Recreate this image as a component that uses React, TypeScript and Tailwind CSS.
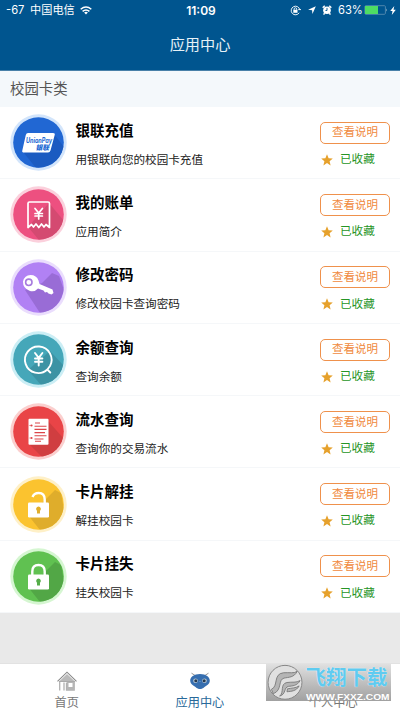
import type { ReactNode } from "react"

type AppItem = {
  name: string
  desc: string
  ring: string
  fill: string
  shade: string
  shadow: string
  glyph: ReactNode
}

const apps: AppItem[] = [
  {
    name: "银联充值",
    desc: "用银联向您的校园卡充值",
    ring: "#d3e5fb",
    fill: "#2167d3",
    shade: "#1a57bb",
    shadow: "M14 39 L26 54 Q48 53 54 33 L44 20 Z",
    glyph: (
      <>
        <path d="M18 19 H43 Q45.3 19 44.7 21 L40.5 36.5 Q39.9 38.5 38 38.5 H14 Q11.7 38.5 12.3 36.5 L15.8 21 Q16.3 19 18 19 Z" fill="#fff" />
        <text x="16" y="29.2" fontSize="7" fontWeight="700" fontStyle="italic" textLength="26" lengthAdjust="spacingAndGlyphs" fill="#2167d3">
          UnionPay
        </text>
        <text x="25.5" y="36" fontSize="6.7" fontWeight="900" fontStyle="italic" textLength="13.5" lengthAdjust="spacingAndGlyphs" fill="#2167d3">
          银联
        </text>
      </>
    ),
  },
  {
    name: "我的账单",
    desc: "应用简介",
    ring: "#fbd0dc",
    fill: "#ed5080",
    shade: "#cb486c",
    shadow: "M18 41 L29 54 Q48 53 54 35 L39 17 Z",
    glyph: (
      <g fill="none" stroke="#fff" strokeWidth="1.7" strokeLinejoin="round" strokeLinecap="round">
        <path d="M18 41.5 V17.5 Q18 16 19.5 16 H38 Q39.5 16 39.5 17.5 V41.5 L36 38.5 L34 41 L31.5 38 L28.8 41.5 L26 38 L23.5 41 L21.5 38.5 Z" />
        <path d="M25 22.5 L28.7 27 L32.4 22.5 M28.7 27 V33 M25 27.5 H32.4 M25 30 H32.4" />
      </g>
    ),
  },
  {
    name: "修改密码",
    desc: "修改校园卡查询密码",
    ring: "#eaddfd",
    fill: "#b181f4",
    shade: "#9265cc",
    shadow: "M15 31 L30 54 Q48 53 54 31 L49 17 L42 14 L32 24 Z",
    glyph: (
      <>
        <path
          d="M20.5 16 Q26.5 16 28.5 21.5 L29.5 25 L42.5 30.5 L43.5 34 L41.5 35.5 L38.5 34.5 L37 33 L35 33.5 L33.5 31.5 L28 29.5 Q24.5 33.5 19.5 31.8 Q12.8 29 13 22.5 Q14.5 16.2 20.5 16 Z"
          fill="#fff"
        />
        <circle cx="18.8" cy="23.3" r="3.2" fill="none" stroke="#a77bde" strokeWidth="1.6" />
      </>
    ),
  },
  {
    name: "余额查询",
    desc: "查询余额",
    ring: "#cbeef5",
    fill: "#45a7b9",
    shade: "#3a8c9d",
    shadow: "M18 39 L31 54 Q48 52 54 35 L40 20 Z",
    glyph: (
      <g fill="none" stroke="#fff" strokeWidth="1.9" strokeLinecap="round" strokeLinejoin="round">
        <path d="M37.3 38.5 A13.3 13.3 0 1 1 40 35 L37.3 38.5 L40.3 41.5" />
        <path d="M25 22 L28.7 26.8 L32.4 22 M28.7 26.8 V34.5 M25 27.5 H32.4 M25 30.7 H32.4" />
      </g>
    ),
  },
  {
    name: "流水查询",
    desc: "查询你的交易流水",
    ring: "#fbcfce",
    fill: "#e94447",
    shade: "#c73c3e",
    shadow: "M19 41 L32 54 Q48 52 54 36 L38 18 Z",
    glyph: (
      <>
        <rect x="18.5" y="15.7" width="20" height="26" rx="1" fill="#fff" />
        <path d="M25 20 H30 M24.5 23.2 H36.5 M24.5 26.4 H36.5 M24.5 29.6 H35 M24.5 32.8 H36.5 M24.5 36 H33.5 M25 38.3 H31" stroke="#dc4549" strokeWidth="1.1" />
        <path d="M18.5 22.5 H21 M18.5 35 H21" stroke="#f2a1a2" strokeWidth=".8" />
        <circle cx="21.5" cy="22.5" r="1.1" fill="#dc4549" />
        <circle cx="21.5" cy="35" r="1.1" fill="#dc4549" />
      </>
    ),
  },
  {
    name: "卡片解挂",
    desc: "解挂校园卡",
    ring: "#fef0c8",
    fill: "#fbc32f",
    shade: "#d5a52b",
    shadow: "M18 39 L30 54 Q48 53 54 34 L51 17 L45 14 L34 25 Z",
    glyph: (
      <>
        <rect x="18" y="26.5" width="21" height="15" rx="1.3" fill="#fff" />
        <path d="M22.5 21 Q24 17 28.7 17 Q34.7 17 34.7 23.5 V28" fill="none" stroke="#fff" strokeWidth="2.4" />
        <path d="M28.5 30.5 A2.4 2.4 0 0 1 30 34.7 V37.5 H27 V34.7 A2.4 2.4 0 0 1 28.5 30.5 Z" fill="#e0ae2c" />
      </>
    ),
  },
  {
    name: "卡片挂失",
    desc: "挂失校园卡",
    ring: "#d5f6d1",
    fill: "#60c151",
    shade: "#4d9e43",
    shadow: "M18 39 L30 54 Q48 53 54 34 L51 17 L45 14 L34 25 Z",
    glyph: (
      <>
        <rect x="18" y="26.5" width="21" height="15" rx="1.3" fill="#fff" />
        <path d="M22.3 28 V23.5 Q22.3 17 28.5 17 Q34.7 17 34.7 23.5 V28" fill="none" stroke="#fff" strokeWidth="2.4" />
        <path d="M28.5 30.5 A2.4 2.4 0 0 1 30 34.7 V37.5 H27 V34.7 A2.4 2.4 0 0 1 28.5 30.5 Z" fill="#55ad49" />
      </>
    ),
  },
]

function AppIcon({ item, id }: { item: AppItem; id: string }) {
  return (
    <svg viewBox="0 0 57 57" className="h-[57px] w-[57px] shrink-0">
      <clipPath id={id}>
        <circle cx="28.5" cy="28.5" r="25.3" />
      </clipPath>
      <circle cx="28.5" cy="28.5" r="28.2" fill={item.ring} />
      <circle cx="28.5" cy="28.5" r="25.3" fill={item.fill} />
      <path d={item.shadow} fill={item.shade} opacity="0.75" clipPath={`url(#${id})`} />
      {item.glyph}
    </svg>
  )
}

function Star() {
  return (
    <svg viewBox="0 0 12 12" className="h-3 w-3">
      <path d="M6 .3 7.6 4.2 11.8 4.5 8.6 7.2 9.6 11.4 6 9.1 2.4 11.4 3.4 7.2 .2 4.5 4.4 4.2Z" fill="#e6a12c" />
    </svg>
  )
}

function AppRow({ item, index }: { item: AppItem; index: number }) {
  return (
    <div className="flex h-[72.3px] items-center border-b border-[#f5f7f9] pr-[10px] pl-[10px]">
      <AppIcon item={item} id={`icon-${index}`} />
      <div className="ml-[8.5px] flex flex-1 flex-col gap-[9px] pt-[5px]">
        <div className="text-[14.5px] leading-5 font-bold text-black">{item.name}</div>
        <div className="text-[11.6px] leading-5 text-[#222]">{item.desc}</div>
      </div>
      <div className="flex w-[70px] flex-col gap-[6px] pt-[6px]">
        <button type="button" className="flex h-[22px] items-center justify-center rounded-[5px] border border-[#ef914c] pt-px text-[11.5px] leading-none text-[#f08a3e]">
          查看说明
        </button>
        <div className="flex h-5 items-center gap-[7px] pl-px text-[11.6px] text-[#269526]">
          <Star />
          已收藏
        </div>
      </div>
    </div>
  )
}

function StatusBar() {
  return (
    <div className="flex h-5 items-center pt-px text-[11.2px] text-white">
      <div className="flex flex-1 items-center pl-1.5">
        <span className="w-[24px]">-67</span>
        <span>中国电信</span>
        <svg viewBox="0 0 14 10" className="ml-[5px] h-[9px] w-3" fill="none" stroke="#fff" strokeWidth="1.7">
          <path d="M.8 3.6 Q7-1.7 13.2 3.6 M3 6 Q7 2.6 11 6" />
          <path d="M4.8 7.3 Q7 5.6 9.2 7.3 L7 9.7Z" fill="#fff" stroke="none" />
        </svg>
      </div>
      <span className="text-[12px] font-semibold">11:09</span>
      <div className="flex flex-1 items-center justify-end pr-[4px]">
        <svg viewBox="0 0 12 12" className="h-[11px] w-[11px]" fill="none" stroke="#fff">
          <path d="M10 8.5 A4.7 4.7 0 1 1 10.6 5 M9 5 h3" />
          <path d="M4.5 5.5 V4.5 Q4.5 3 5.9 3 Q7.3 3 7.3 4.5 V5.5" strokeWidth=".9" />
          <rect x="3.6" y="5.2" width="4.6" height="3.3" fill="#fff" stroke="none" />
        </svg>
        <svg viewBox="0 0 9 9" className="ml-[7px] h-2 w-2">
          <path d="M8.8 .2 5 9 4.6 4.7 .1 4.3Z" fill="#fff" />
        </svg>
        <svg viewBox="0 0 11 11" className="ml-[6px] h-[10px] w-[10px]">
          <circle cx="5.5" cy="5.8" r="4.2" fill="#fff" />
          <path d="M.8 3 3 .8 M8 .8 10.2 3 M2.8 9 1.8 10.5 M8.2 9 9.2 10.5" stroke="#fff" strokeWidth="1.6" />
          <path d="M5.5 3.2 V6 H3.8" fill="none" stroke="#00558f" />
        </svg>
        <span className="ml-[6px] w-[24px]">63%</span>
        <svg viewBox="0 0 24 10" className="ml-[2px] h-[10px] w-6">
          <rect x=".9" y=".7" width="20.5" height="8.6" rx="1" fill="none" stroke="#568bb0" strokeWidth=".9" />
          <rect x="1" y="1" width="13" height="8" fill="#4ddc63" />
          <path d="M22.2 3.5 Q24 5 22.2 6.5Z" fill="#8eb2ca" />
        </svg>
        <svg viewBox="0 0 6 9" className="ml-[2px] h-[9px] w-[6px]">
          <path d="M4.3 0 .2 5 H2.5 L1.8 9 5.8 3.8 H3.5Z" fill="#fff" />
        </svg>
      </div>
    </div>
  )
}

function HomeIcon() {
  return (
    <svg viewBox="0 0 20 20" className="h-5 w-5">
      <path d="M2 10.5 10 3 18 10.5Z" fill="#bababa" />
      <path d="M.5 10.3 10 1.2 19.5 10.3" fill="none" stroke="#888" strokeWidth="1.1" />
      <path d="M2.7 10.8 V19.5 M17.2 10.8 V19 H9.5 V11.5 M7 11.5 V19.5" fill="none" stroke="#b1b1b1" strokeWidth="1.3" />
      <path d="M10 10.5 H17 V19 H10Z M11.5 12 V16 H15.5 V12Z" fill="#b6b6b6" fillRule="evenodd" />
      <path d="M2 10.5 H18" stroke="#aaa" />
    </svg>
  )
}

function RobotIcon() {
  return (
    <svg viewBox="0 0 20 20" className="h-5 w-5">
      <path d="M1.5 2.2 6 5 M18.5 2.2 14 5" stroke="#777" strokeWidth=".8" />
      <path d="M10 3 C16 3 20 6 19.8 10 C19.6 13 17 14.5 14.5 16 C13 17.5 11.5 18 10 18 C8.5 18 7 17.5 5.5 16 C3 14.5 .4 13 .2 10 C0 6 4 3 10 3Z" fill="#366eaf" />
      <circle cx="5.5" cy="9.7" r="2.3" fill="#b9c9d4" />
      <circle cx="14.5" cy="9.7" r="2.3" fill="#b9c9d4" />
      <circle cx="5.8" cy="9.7" r="1.5" fill="#24384f" />
      <circle cx="14.2" cy="9.7" r="1.5" fill="#24384f" />
      <path d="M9 10 10 11 11 10" fill="none" stroke="#6c9ccc" strokeWidth=".6" />
    </svg>
  )
}

function Watermark() {
  return (
    <div className="absolute top-0 left-[266px] flex h-[37px] w-[125px] items-center bg-linear-to-b from-[#dededeee] to-[#929292dd]">
      <svg viewBox="0 0 38 38" className="ml-px h-[37px] w-[37px] shrink-0">
        <circle cx="18.5" cy="18.8" r="17.4" fill="#e0e0e0" stroke="#858585" strokeWidth="1" />
        <path
          d="M4.5 26 C12 23 6 10 17 9 C23 8.5 28 10 31 7.5 C28 14 22 13.5 17.5 14.5 C11 16 16 27 6.5 30.5Z M13 33 C18 29 13 20.5 20.5 19 C26 18.2 30 19.5 34 17 C31 22.5 26 22.5 22 23 C17 24 20 31 13 33Z M21 25.5 C26 24.5 29 25 33 22.5 C30 28 25 28 20.5 28.5Z"
          fill="#b5b5b5"
          stroke="#777"
          strokeWidth=".9"
        />
      </svg>
      <div className="flex flex-col pl-[1.5px] whitespace-nowrap">
        <span className="h-[24px] text-[20.5px] leading-[25px] font-bold text-[#5fcbf0] [text-shadow:0_0_1px_#fff]">飞翔下载</span>
        <svg viewBox="0 0 84 9" className="mt-[3px] h-[9px] w-[84px] font-['Liberation_Sans',sans-serif]">
          <text x="0" y="7.8" fontSize="9" fontWeight="700" textLength="83.5" lengthAdjust="spacingAndGlyphs" fill="#fff">
            WWW.FXXZ.COM
          </text>
        </svg>
      </div>
    </div>
  )
}

function TabBar() {
  return (
    <nav className="relative flex h-[47px] bg-white pt-[7px] text-[12.2px] leading-[17px]">
      <div className="flex w-[133.3px] flex-col items-center gap-[3px] text-[#777]">
        <HomeIcon />
        <span>首页</span>
      </div>
      <div className="flex w-[133.3px] flex-col items-center gap-[3px] text-[#28699a]">
        <RobotIcon />
        <span>应用中心</span>
      </div>
      <div className="flex w-[133.3px] flex-col items-center gap-[3px] text-[#777]">
        <span className="h-5" />
        <span>个人中心</span>
      </div>
      <Watermark />
    </nav>
  )
}

export default function App() {
  return (
    <div className="flex h-[711px] w-[400px] flex-col overflow-hidden bg-[#e9e9e9] font-['Inter','Noto_Sans_CJK_SC',sans-serif]">
      <header className="h-[71px] shrink-0 border-b border-[#4880a8] bg-[#00558f]">
        <StatusBar />
        <h1 className="flex h-[50px] items-center justify-center pt-px text-[15.2px] text-[#e6f1f7]">应用中心</h1>
      </header>
      <h2 className="flex h-[36px] shrink-0 items-center bg-[#f4f8fb] pl-[10px] text-[14.4px] text-[#555]">校园卡类</h2>
      <main className="h-[506px] shrink-0 bg-white">
        {apps.map((item, i) => (
          <AppRow key={item.name} item={item} index={i} />
        ))}
      </main>
      <div className="h-[51px] shrink-0 border-b border-[#e2e2e2]" />
      <TabBar />
    </div>
  )
}
